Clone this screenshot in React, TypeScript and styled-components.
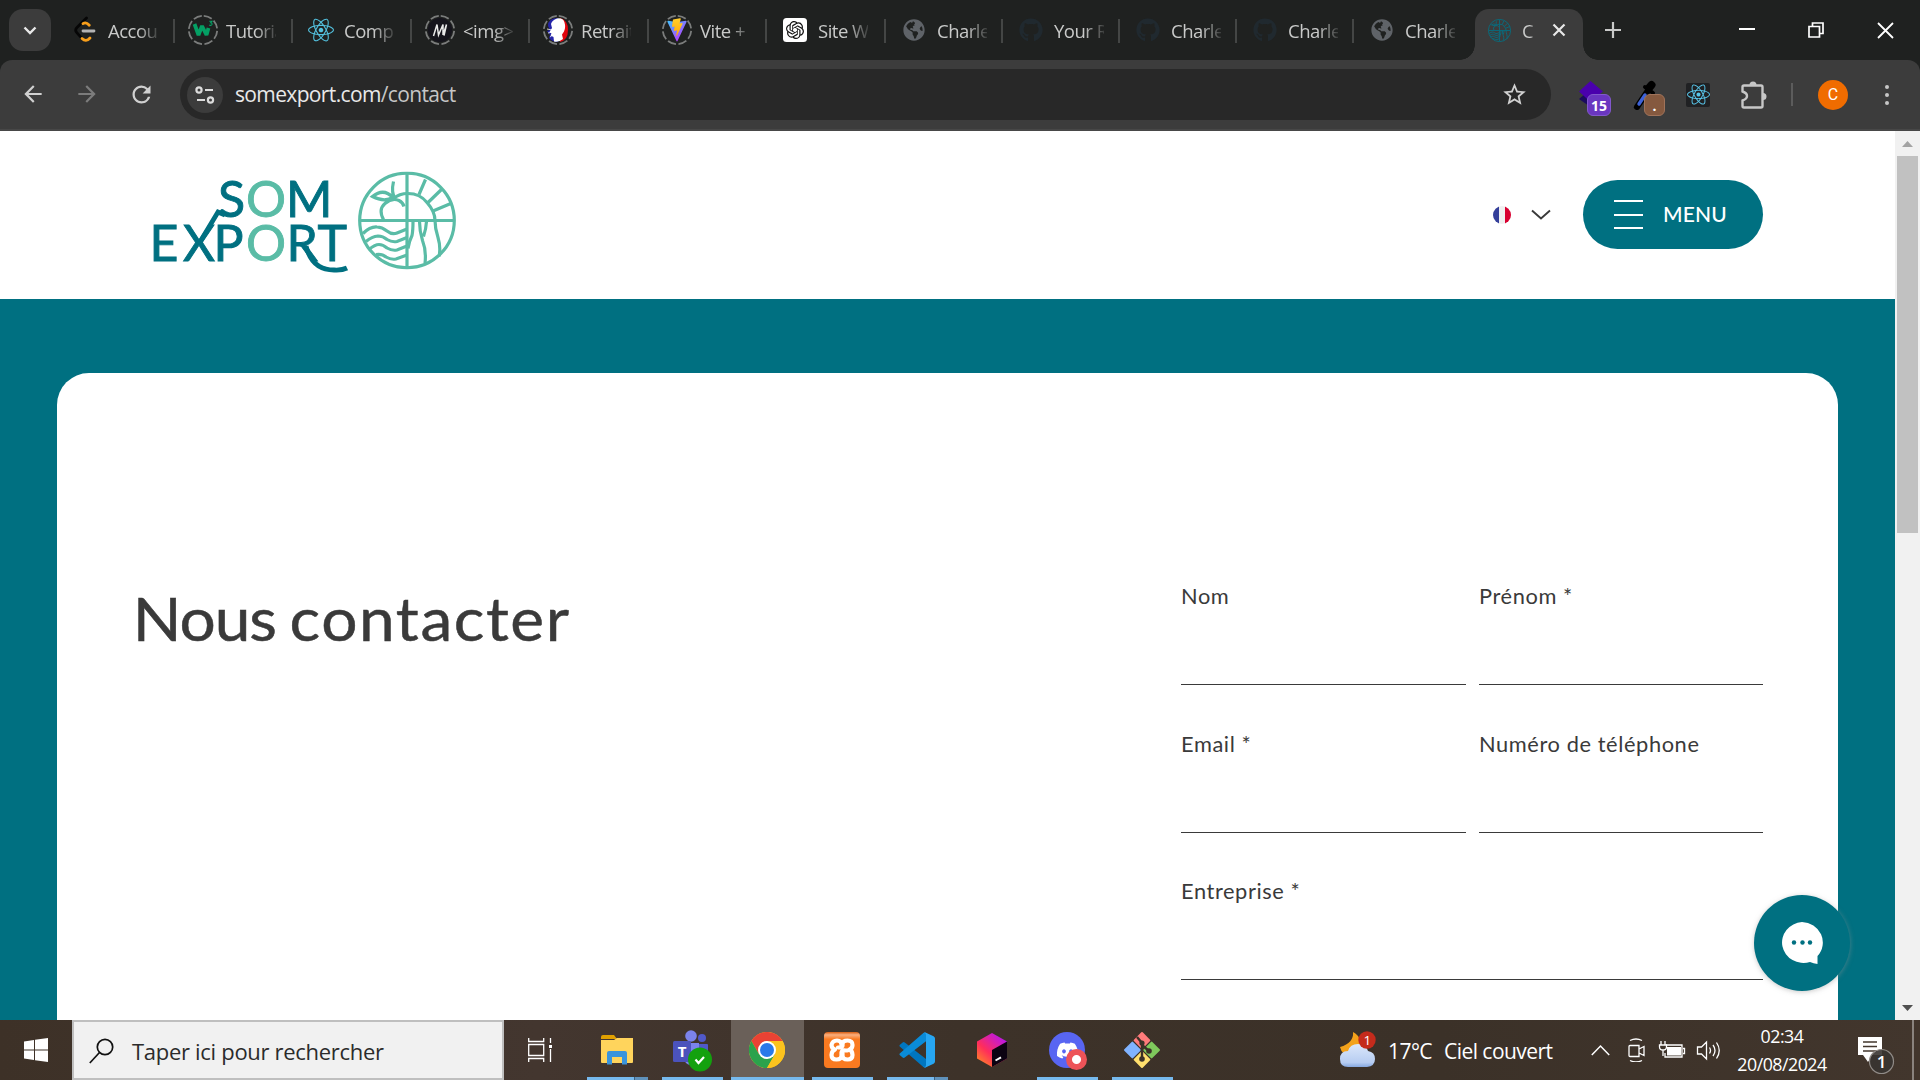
import React from "react";
import styled, { createGlobalStyle } from "styled-components";
import { FaReact, FaGithub, FaDiscord, FaGlobeAmericas } from "react-icons/fa";
import { SiOpenai } from "react-icons/si";
import { MdArrowBack, MdArrowForward, MdRefresh, MdStarBorder } from "react-icons/md";

const TEAL = "#007081";
const MINT = "#5abca6";

const GlobalStyle = createGlobalStyle`
  * { box-sizing: border-box; }
  body { margin: 0; overflow: hidden; background: #fff; }
  svg { display: block; flex: none; }
`;

const Screen = styled.div`
  width: 1920px;
  height: 1080px;
  display: flex;
  flex-direction: column;
  overflow: hidden;
  font-family: "Open Sans", "Noto Sans", sans-serif;
`;

/* ---------- Browser tabs ---------- */
const TabStrip = styled.div`
  height: 60px;
  flex: none;
  display: flex;
  background: #1f2120;
`;
const TabSearch = styled.div`
  width: 42px;
  height: 42px;
  margin: 9px 5px 0 9px;
  border-radius: 14px;
  background: #3c3c3c;
  display: flex;
  align-items: center;
  justify-content: center;
`;
const Tab = styled.div<{ $w: number; $last?: boolean }>`
  width: ${(p) => p.$w}px;
  height: 60px;
  display: flex;
  align-items: center;
  position: relative;
  &::after {
    content: "";
    display: ${(p) => (p.$last ? "none" : "block")};
    position: absolute;
    right: -1px;
    top: 19px;
    width: 2px;
    height: 24px;
    background: #444645;
  }
`;
const TabIcon = styled.div`
  width: 34px;
  height: 34px;
  margin-left: 12px;
  flex: none;
  display: flex;
  align-items: center;
  justify-content: center;
`;
const Ring = styled.div`
  width: 32px;
  height: 32px;
  display: grid;
  place-items: center;
  > * { grid-area: 1 / 1; }
`;
const TabTitle = styled.span<{ $w?: number; $gap?: number }>`
  width: ${(p) => p.$w ?? 50}px;
  margin-left: ${(p) => p.$gap ?? 6}px;
  overflow: hidden;
  white-space: nowrap;
  font-size: 18.5px;
  line-height: 30px;
  letter-spacing: -0.5px;
  color: #c9cac9;
  padding-top: 2px;
  mask-image: linear-gradient(to right, #000 60%, transparent 108%);
`;
const ActiveTab = styled.div`
  width: 108px;
  height: 51px;
  margin: 9px 0 0 4px;
  border-radius: 14px 14px 0 0;
  background: #3c3c3c;
  position: relative;
  display: flex;
  align-items: center;
  padding: 0 17px 9px 13px;
  &::before, &::after {
    content: "";
    position: absolute;
    bottom: 0;
    width: 15px;
    height: 15px;
  }
  &::before { left: -15px; background: radial-gradient(circle at 0 0, transparent 14.5px, #3c3c3c 15px); }
  &::after { right: -15px; background: radial-gradient(circle at 100% 0, transparent 14.5px, #3c3c3c 15px); }
`;
const WindowControls = styled.div`
  flex: 1;
  height: 60px;
  display: flex;
  justify-content: space-between;
  align-items: center;
  padding: 0 26px 0 21px;
`;
const ControlGroup = styled.div`
  display: flex;
  align-items: center;
  gap: 53px;
`;
const CloseWrap = styled.div`
  margin-left: auto;
`;

/* ---------- Toolbar ---------- */
const ToolbarBack = styled.div`
  height: 71px;
  flex: none;
  background: #1f2120;
`;
const Toolbar = styled.div`
  height: 71px;
  border-radius: 12px 12px 0 0;
  background: #3c3c3c;
  border-bottom: 2px solid #474747;
  display: flex;
  align-items: center;
  padding: 0 21px 0 20px;
`;
const NavButtons = styled.div`
  display: flex;
  gap: 28px;
  width: 160px;
  flex: none;
`;
const AddressBar = styled.div`
  width: 1371px;
  height: 51px;
  border-radius: 26px;
  background: #282828;
  display: flex;
  align-items: center;
  padding: 0 23px 0 7px;
`;
const SiteInfo = styled.div`
  width: 36px;
  height: 36px;
  border-radius: 50%;
  background: #3c3c3c;
  display: flex;
  align-items: center;
  justify-content: center;
`;
const Url = styled.div`
  flex: 1;
  margin: -1px 0 0 12px;
  font-size: 21px;
  letter-spacing: -0.64px;
  color: #e9e9e9;
  span { color: #c6c6c6; }
`;
const Extensions = styled.div`
  flex: 1;
  height: 68px;
  display: flex;
  align-items: center;
  padding-left: 27px;
`;
const ExtSlot = styled.div<{ $w: number }>`
  width: ${(p) => p.$w}px;
  height: 44px;
  position: relative;
  display: flex;
  align-items: center;
`;
const Badge = styled.span<{ $bg: string; $edge: string; $x: number; $w: number }>`
  position: absolute;
  left: ${(p) => p.$x}px;
  top: 21px;
  width: ${(p) => p.$w}px;
  height: 22px;
  border-radius: 6px;
  background: ${(p) => p.$bg};
  border: 1px solid ${(p) => p.$edge};
  color: #fff;
  font-size: 14px;
  font-weight: 700;
  line-height: 21px;
  text-align: center;
`;
const ReactTile = styled.div`
  width: 24px;
  height: 24px;
  background: #202123;
  border-radius: 2px;
  display: flex;
  align-items: center;
  justify-content: center;
`;
const ToolDivider = styled.div`
  width: 2px;
  height: 23px;
  background: #5c5c5c;
  margin: 0 25px 0 0;
`;
const Avatar = styled.div`
  width: 30px;
  height: 30px;
  border-radius: 50%;
  background: #f06c00;
  color: #fff;
  font: 16px/30px "Roboto", sans-serif;
  text-align: center;
`;
const Dots = styled.div`
  margin-left: auto;
  margin-right: 10px;
  display: flex;
  flex-direction: column;
  gap: 4px;
  i { width: 4px; height: 4px; border-radius: 50%; background: #c7c7c7; }
`;

/* ---------- Page ---------- */
const Viewport = styled.div`
  height: 889px;
  flex: none;
  display: flex;
  overflow: hidden;
  position: relative;
`;
const Page = styled.div`
  width: 1895px;
  height: 889px;
  display: flex;
  flex-direction: column;
  background: ${TEAL};
  font-family: "Lato", sans-serif;
  color: #3a3a3a;
`;
const Header = styled.header`
  height: 168px;
  flex: none;
  background: #fff;
  display: flex;
  align-items: flex-start;
  justify-content: space-between;
  padding: 34px 132px 0 150px;
`;
const HeaderActions = styled.div`
  display: flex;
  align-items: center;
  padding-top: 15px;
`;
const Flag = styled.div`
  width: 18px;
  height: 18px;
  border-radius: 50%;
  background: linear-gradient(to right, #343f9a 33%, #f0f0f0 33%, #f0f0f0 67%, #d80030 67%);
  margin-right: 20px;
`;
const MenuButton = styled.button`
  width: 180px;
  height: 69px;
  margin-left: 32px;
  border: 0;
  border-radius: 35px;
  background: ${TEAL};
  color: #fff;
  display: flex;
  align-items: center;
  padding: 0 0 0 31px;
  font: 500 21px "Lato", sans-serif;
  letter-spacing: 0.2px;
`;
const MenuLabel = styled.span`
  padding-bottom: 3px;
`;
const Burger = styled.span`
  width: 29px;
  height: 29px;
  margin-right: 20px;
  display: flex;
  flex-direction: column;
  justify-content: space-between;
  i { height: 2px; background: #fff; }
`;
const Card = styled.main`
  margin: 74px 57px 0;
  flex: 1;
  background: #fff;
  border-radius: 32px 32px 0 0;
  display: flex;
  justify-content: space-between;
  padding: 210px 75px 0 76px;
`;
const Title = styled.h1`
  margin: -1px 0 0;
  font-size: 60px;
  font-weight: 400;
  line-height: 72px;
  word-spacing: -1.5px;
  transform: scaleX(1.066);
  transform-origin: 5px 0;
  -webkit-text-stroke: 0.5px #3a3a3a;
`;
const Word = styled.span<{ $track: number }>`
  letter-spacing: ${(p) => p.$track}px;
`;
const Form = styled.form`
  width: 582px;
  display: grid;
  grid-template-columns: 285px 284px;
  column-gap: 13px;
  grid-auto-rows: 147.5px;
`;
const Field = styled.label<{ $wide?: boolean }>`
  grid-column: ${(p) => (p.$wide ? "1 / -1" : "auto")};
  height: 102px;
  border-bottom: 1px solid #3a3a3a;
  font-size: 21.8px;
  line-height: 26px;
  letter-spacing: 0.6px;
`;
const ChatBubble = styled.div`
  position: absolute;
  left: 1754px;
  top: 764px;
  width: 96px;
  height: 96px;
  border-radius: 50%;
  background: ${TEAL};
  box-shadow: 0 1px 5px rgba(150, 150, 150, 0.5);
  display: flex;
  align-items: center;
  justify-content: center;
  padding-right: 1px;
`;
const Scrollbar = styled.div`
  width: 25px;
  height: 889px;
  background: #f1f1f1;
  display: flex;
  flex-direction: column;
  align-items: center;
  padding: 10px 0 9px;
`;
const Thumb = styled.div`
  width: 21px;
  height: 377px;
  margin: 9px 0 auto;
  background: #c1c1c1;
`;

/* ---------- Taskbar ---------- */
const Taskbar = styled.div`
  height: 60px;
  flex: none;
  background: linear-gradient(to right, #3d3127, #43362f 28%, #3d3229 50%, #3b3128 75%, #42362d);
  display: flex;
  color: #fff;
`;
const Center = styled.div<{ $w: number }>`
  width: ${(p) => p.$w}px;
  height: 60px;
  display: flex;
  align-items: center;
  justify-content: center;
`;
const SearchBox = styled.div`
  width: 432px;
  height: 60px;
  border: 2px solid #bfbfbf;
  background: #f1f1f1;
  display: flex;
  align-items: center;
  padding: 2px 0 0 15px;
  font-size: 22px;
  letter-spacing: -0.3px;
  color: #2b2b2b;
  span { margin-left: 18px; }
`;
const AppSlot = styled.div<{ $bar?: "full" | "split"; $active?: boolean }>`
  width: 75px;
  height: 60px;
  display: flex;
  align-items: center;
  justify-content: center;
  padding-right: 1px;
  position: relative;
  background: ${(p) => (p.$active ? "linear-gradient(to right, transparent 1px, #6a6059 1px, #6a6059 74px, transparent 74px)" : "none")};
  &::after {
    content: "";
    position: absolute;
    bottom: 0;
    left: ${(p) => (p.$active ? 1 : 7)}px;
    right: ${(p) => (p.$active ? 1 : 7)}px;
    height: 3px;
    background: ${(p) => (!p.$bar ? "none" : p.$bar === "split" ? "linear-gradient(to right, #76b9ed 47px, #3d5f7c 47px, #3d5f7c 48px, #5f91ba 48px)" : "#76b9ed")};
  }
`;
const Tray = styled.div`
  margin-left: auto;
  display: flex;
  align-items: center;
  width: 581px;
`;
const Weather = styled.div`
  display: flex;
  align-items: center;
  width: 252px;
  font-size: 21px;
  letter-spacing: -0.55px;
  white-space: nowrap;
  svg { margin-right: 12px; }
  span { margin-right: 12px; padding-top: 2px; }
`;
const TrayIcons = styled.div`
  display: flex;
  align-items: center;
  width: 144px;
`;
const Clock = styled.div`
  width: 94px;
  text-align: center;
  font-size: 17.8px;
  line-height: 28px;
  letter-spacing: -0.5px;
  white-space: nowrap;
`;
const Notifications = styled.div`
  margin-left: 29px;
  width: 54px;
`;
const DesktopEdge = styled.div`
  width: 2px;
  height: 60px;
  background: #8a837e;
`;

const DashRing = ({ children }: { children: React.ReactNode }) => (
  <Ring>
    <svg width="32" height="32" viewBox="0 0 32 32" fill="none">
      <circle cx="16" cy="16" r="14.2" stroke="#7b7d7c" strokeWidth="1.8" strokeDasharray="8.6 2.55" transform="rotate(-87 16 16)" />
    </svg>
    {children}
  </Ring>
);

const LeetCode = () => (
  <svg width="22" height="28" viewBox="0 0 22 28" fill="none" strokeWidth="2.8" strokeLinecap="round">
    <path d="M12.500 2 3 11.500q-2.600 2.700 0 5.400l4.500 5" stroke="#060606" />
    <path d="M9 7.600q3-2 6.300 1.700M8 22.500q4 4 8-.500" stroke="#f89f1b" />
    <path d="M9 15h11" stroke="#b3b3b3" />
  </svg>
);
const W3 = () => (
  <svg width="22" height="22" viewBox="0 0 22 22" fill="none" stroke="#04a064">
    <path d="M2.500 5 6.500 16 10 7l4.500 9L16.500 9" strokeWidth="3.800" strokeLinejoin="bevel" />
    <path d="M17.300 2.200H20l-1.400 1.600q1.800.3 1.400 1.700-.9 1.400-2.700.4" strokeWidth="1.100" />
  </svg>
);
const Mdn = () => (
  <svg width="26" height="26" viewBox="0 0 26 26">
    <circle cx="13" cy="13" r="12" fill="#15141c" />
    <path d="M6.500 19 10 7.500 11.500 18 16 7.500V18M16 18l3.500-10.500M17 18.600 19.500 7.500" fill="none" stroke="#e9e9e9" strokeWidth="1.500" />
  </svg>
);
const Marianne = () => (
  <svg width="24" height="26" viewBox="0 0 24 26">
    <path d="M12 1Q2 1 2 9l2 4-3 1 3 4-1 3q3 4 9 4Z" fill="#2424a8" />
    <path d="M14 1q8 2 8 12t-8 12Z" fill="#e1060e" />
    <path d="M11 1.500q6-1 7.500 4 1.500 5-.5 9l-2 3 1 4.500q-4 3.500-9 2.500l-.5-4.500-3-1.500 1-2-2-1.500L6 11 5 7q1-4 6-5.500Z" fill="#fff" />
    <path d="m1 12 5 1M2 16l5-1M4 20l4-3" stroke="#fff" strokeWidth=".8" />
  </svg>
);
const Vite = () => (
  <svg width="22" height="24" viewBox="0 0 22 24">
    <defs>
      <linearGradient id="vp" x1="0" y1="0" x2=".7" y2="1"><stop stopColor="#3fc4ff" /><stop offset="1" stopColor="#bd34fe" /></linearGradient>
      <linearGradient id="vy" x1="0" y1="0" x2="0" y2="1"><stop stopColor="#ffcf2e" /><stop offset="1" stopColor="#ffa800" /></linearGradient>
    </defs>
    <path d="M1.500 4Q1 2.500 2.500 2.700l8.500 1.500 8.500-1.500q1.500 0 1 1.300L11.500 23q-.5.800-1 0Z" fill="url(#vp)" />
    <path d="m7 1.500 7-1.300q1 0 .8.800l-1.300 4.500 2.500-.4q.8 0 .5.900L11 17.500q-.6.900-.8-.2l1-5-2.800.6q-.7 0-.6-.7l1-3.700-2.200.4q-.6 0-.6-.8Z" fill="url(#vy)" />
  </svg>
);
const Emblem = ({ size, color, stroke = 3.2 }: { size: number; color: string; stroke?: number }) => (
  <svg width={size} height={size} viewBox="0 0 98 98" fill="none" stroke={color} strokeWidth={stroke}>
    <circle cx="49" cy="49" r="47.300" />
    <path d="M49 2v94M2 49h94" />
    <path d="M36 27Q41 22 50 22 62 22 69 31 77 40 77 49" />
    <path d="m61 23 6.500-15M69 32 84 17.500M75 39.500l19-8" />
    <path d="M25.500 48Q20 38 27 32q7-6 14-3 4 2 5 6M37 27q-4-6-1.500-17M14.500 25q11-9 20.500 1-9 5-20.500-1Z" />
    <path d="M5 62q7-7 14-6.500 5 0 10 4t10 2l10-4M8 70q6-5 12-5.500 5 0 9 3.500 5 3 10 2l10-4M11 78q6-5 10-5 4 0 8 3.500 5 3 10 2l10-4M18 83q6-1 10 2.500 5 3 10 2l11-4" />
    <path d="M55 50q0 9-1 14-3 6-4 13M61.500 50q0 9 3 19 4 10 2.500 23M68.500 50q-.5 8-3 15M77 49q0 8 3 17 3 10 1 19" />
  </svg>
);

const Logo = () => (
  <svg width="312" height="118" viewBox="150 165 312 118" fontFamily="Lato, sans-serif" fontSize="50" strokeWidth="0.9">
    <g fill={TEAL} stroke={TEAL}>
      <text x="218" y="217">S</text>
      <text x="286" y="217">M</text>
      <text x="149.500" y="260.500">E</text>
      <text x="183" y="260.500" textLength="32" lengthAdjust="spacingAndGlyphs">X</text>
      <text x="213.500" y="260.500">P</text>
      <text x="286.500" y="260.500">R</text>
      <text x="317.500" y="260.500">T</text>
    </g>
    <g fill={MINT} stroke={MINT}>
      <text x="246" y="217">O</text>
      <text x="246" y="260.500">O</text>
    </g>
    <path d="M200 242 218 212l7 3M306 246q6 24 28 24 8 .5 13-2" fill="none" stroke={TEAL} strokeWidth="4.800" />
    <g transform="translate(358 171.500)">
      <Emblem size={98} color={MINT} />
    </g>
  </svg>
);

const Layers = () => (
  <svg width="26" height="30" viewBox="0 0 26 30">
    <path d="M1 19l6-5 12 12-5 2Z" fill="#1b0a5e" />
    <path d="M12.500 1 25 11.500 12.500 22 1 11.500Z" fill="#4a00ad" />
  </svg>
);
const Dropper = () => (
  <svg width="26" height="30" viewBox="0 0 26 30" strokeLinecap="round">
    <path d="M4 27 14 12" stroke="#000" strokeWidth="6" />
    <path d="m6 24 6-9" stroke="#3d62d8" strokeWidth="3.400" />
    <path d="m16 8 2.500-3" stroke="#000" strokeWidth="8" />
    <path d="m12 7 8 6" stroke="#000" strokeWidth="4" />
  </svg>
);
const Puzzle = () => (
  <svg width="27" height="30" viewBox="0 0 27 30">
    <path d="M3 5.500h17q1.500 0 1.500 1.500v19q0 1.500-1.500 1.500H3Q1.500 27.500 1.500 26v-5.500Q6 19 6 16t-4.500-4.500V7Q1.500 5.500 3 5.500Z" fill="none" stroke="#c7c7c7" strokeWidth="2.400" />
    <path d="M8.500 5a3.500 3.500 0 0 1 7 0ZM22 13a3.500 3.500 0 0 1 0 7Z" fill="#c7c7c7" />
  </svg>
);

const Explorer = () => (
  <svg width="34" height="30" viewBox="0 0 34 30">
    <path d="M1 2q0-2 2-2h11l3 4H1Z" fill="#e0a000" />
    <path d="M1 5h13l3-2h16v24q0 1-1 1H2q-1 0-1-1Z" fill="#ffd45c" />
    <path d="M7 29.500V18q0-2 2-2h16q2 0 2 2v11.500h-5V22H12v7.500Z" fill="#3a94dc" />
  </svg>
);
const Teams = () => (
  <svg width="40" height="44" viewBox="0 0 40 44">
    <circle cx="19" cy="8" r="5.800" fill="#7b83eb" />
    <circle cx="30" cy="10" r="4" fill="#5059c9" />
    <path d="M24 16h11q1 0 1 1v10q0 6-8 7Z" fill="#5059c9" />
    <path d="M12 15h15v12q-1 10-9 10-5-1-6-6Z" fill="#7b83eb" />
    <rect x="1" y="13" width="18" height="21" rx="1.500" fill="#4b53bc" />
    <text x="10" y="29" fontFamily="Open Sans" fontSize="15" fontWeight="700" textAnchor="middle" fill="#fff">T</text>
    <circle cx="28" cy="31.500" r="12" fill="#13a10e" />
    <path d="m23.500 31.500 3 3.500 5.500-6" fill="none" stroke="#fff" strokeWidth="2.200" />
  </svg>
);
const Chrome = () => (
  <svg width="36" height="36" viewBox="0 0 36 36">
    <circle cx="18" cy="18" r="18" fill="#fcc31e" />
    <path d="M18 9h15.600A18 18 0 0 0 2.400 9l7.800 13.500Z" fill="#e94234" />
    <path d="M2.400 9A18 18 0 0 0 18 36l7.800-13.500L18 18l-7.800 4.500Z" fill="#2ba24c" />
    <path d="M18 36a18 18 0 0 0 15.600-27H18l7.800 13.500Z" fill="#fcc31e" />
    <circle cx="18" cy="18" r="9" fill="#fff" />
    <circle cx="18" cy="18" r="7" fill="#2979ea" />
  </svg>
);
const XamppTile = styled.div`
  width: 36px;
  height: 36px;
  border-radius: 4px;
  background: linear-gradient(#d85c10, #fab080 8%, #fa7a20 20%);
  display: flex;
  align-items: center;
  justify-content: center;
  color: #fff;
`;
const XamppMark = () => (
  <svg width="28" height="24" viewBox="0 0 28 24" fill="none" stroke="#fff" strokeWidth="4.2" strokeLinejoin="round" strokeLinecap="round">
    <path d="M10 9.500h3.500V6.500Q13.500 2.500 9 2.500T3.500 7Q3.500 10.500 7 11.500 3.500 13 3.500 17q0 4.500 5 4.500t5-4V14.500Q14 12 17.500 12.500h2" />
    <path d="M14.500 8V6.500q0-4 5-4t5 4.500q0 3.500-3 4.500 3 1.500 3 5.500 0 4.500-5 4.500t-5-4V15" />
  </svg>
);
const VsCode = () => (
  <svg width="36" height="36" viewBox="0 0 100 100">
    <path d="M2 36 10 29q3-2 6 0L75 75v23Q70 100 66 96L2 40Q0 38 2 36Z" fill="#0076c0" />
    <path d="M2 64 10 71q3 2 6 0L75 26V2Q70 0 66 4L2 60Q0 62 2 64Z" fill="#0a8bd8" />
    <path d="M75 2 96 12q4 2 4 6v64q0 4-4 6L75 98q-4 2-8-2 8 4 8-4V8q0-8-8-4 4-4 8-2Z" fill="#27a6f2" />
  </svg>
);
const Toolbox = () => (
  <svg width="30" height="34" viewBox="0 0 30 34">
    <defs>
      <linearGradient id="tb" x1="0" y1="1" x2=".8" y2="0"><stop stopColor="#ff9b1a" /><stop offset=".45" stopColor="#ff2d5b" /><stop offset="1" stopColor="#b415f5" /></linearGradient>
    </defs>
    <path d="M15 0 30 8.500v17L15 34 0 25.500v-17Z" fill="url(#tb)" />
    <path d="m15 17 15-8.500v17L15 34Z" fill="#0c0312" />
    <path d="m18.500 27.500 5.500-3.200" stroke="#fff" strokeWidth="2" />
  </svg>
);
const DiscordDisc = styled.div`
  width: 36px;
  height: 36px;
  border-radius: 50%;
  background: #5865f2;
  display: flex;
  align-items: center;
  justify-content: center;
  position: relative;
  color: #fff;
  &::after {
    content: "";
    position: absolute;
    right: -2px;
    bottom: -2px;
    width: 21px;
    height: 21px;
    border-radius: 50%;
    background: radial-gradient(circle, #fff 4px, #ed5358 5px);
  }
`;
const GitDiamond = () => (
  <svg width="38" height="38" viewBox="0 0 38 38">
    <g transform="rotate(45 19 19)">
      <rect x="6" y="6" width="12.400" height="12.400" rx="1" fill="#ff7b7b" />
      <rect x="19.600" y="6" width="12.400" height="12.400" rx="1" fill="#7fc95c" />
      <rect x="6" y="19.600" width="12.400" height="12.400" rx="1" fill="#80b3ff" />
      <rect x="19.600" y="19.600" width="12.400" height="12.400" rx="1" fill="#ffdf6d" />
    </g>
    <path d="m14 6 5 6v17M19 14l7 6" stroke="#3b3128" strokeWidth="2.400" fill="none" />
    <circle cx="19" cy="12" r="2.600" fill="#3b3128" />
    <circle cx="19" cy="28" r="2.800" fill="#3b3128" />
    <circle cx="26" cy="20" r="2.800" fill="#3b3128" />
  </svg>
);
const WeatherIcon = () => (
  <svg width="37" height="42" viewBox="0 0 37 42">
    <defs><linearGradient id="cl" x1="0" y1="0" x2="0" y2="1"><stop stopColor="#dbe7fa" /><stop offset=".8" stopColor="#b7cdf2" /><stop offset="1" stopColor="#86a8e0" /></linearGradient></defs>
    <path d="M14 3q1 11-13 15 2 9 12 8 9-2 9-13-2-7-8-10Z" fill="#f3a21b" />
    <path d="M9 38q-8 0-8-8t8-8q2-7 10-7 8 0 10 7 7 1 7 8t-8 8Z" fill="url(#cl)" />
    <circle cx="28" cy="11" r="8.700" fill="#c42b1c" />
    <text x="28" y="16" fontSize="13.500" textAnchor="middle" fill="#fff">1</text>
  </svg>
);

type TabInfo = { title: string; icon: React.ReactNode; w: number };
const globe = <FaGlobeAmericas size={22} color="#5f6368" />;
const octocat = <FaGithub size={24} color="#20292f" />;
const tabs: TabInfo[] = [
  { title: "Accoun", icon: <LeetCode />, w: 118 },
  { title: "Tutoria", icon: <DashRing><W3 /></DashRing>, w: 118 },
  { title: "Compo", icon: <FaReact size={26} color="#53c1de" />, w: 119 },
  { title: "<img>:", icon: <DashRing><Mdn /></DashRing>, w: 118 },
  { title: "Retraite", icon: <DashRing><Marianne /></DashRing>, w: 119 },
  { title: "Vite + R", icon: <DashRing><Vite /></DashRing>, w: 118 },
  {
    title: "Site We",
    icon: (
      <svg width="24" height="24" viewBox="0 0 24 24">
        <rect width="24" height="24" rx="3.500" fill="#fff" />
        <SiOpenai x={3} y={3} size={18} color="#111" />
      </svg>
    ),
    w: 119,
  },
  { title: "Charles", icon: globe, w: 117 },
  { title: "Your Re", icon: octocat, w: 117 },
  { title: "Charles", icon: octocat, w: 117 },
  { title: "Charles", icon: octocat, w: 117 },
  { title: "Charles", icon: globe, w: 118 },
];

export default function App() {
  return (
    <Screen>
      <GlobalStyle />
      <TabStrip>
        <TabSearch>
          <svg width="14" height="9" viewBox="0 0 14 9" fill="none" stroke="#e8e8e8" strokeWidth="2.400"><path d="m1.500 1.500 5.500 5.500 5.500-5.500" /></svg>
        </TabSearch>
        {tabs.map((t, i) => (
          <Tab key={i} $w={t.w} $last={i === tabs.length - 1}>
            <TabIcon>{t.icon}</TabIcon>
            <TabTitle>{t.title}</TabTitle>
          </Tab>
        ))}
        <ActiveTab>
          <Emblem size={23} color="#0a6b7c" stroke={4} />
          <TabTitle $w={13} $gap={11}>C</TabTitle>
          <CloseWrap>
            <svg width="14" height="14" viewBox="0 0 14 14" stroke="#e8e8e8" strokeWidth="2.200"><path d="m1.500 1.500 11 11m0-11-11 11" /></svg>
          </CloseWrap>
        </ActiveTab>
        <WindowControls>
          <svg width="18" height="18" viewBox="0 0 18 18" stroke="#c9cac9" strokeWidth="2.200"><path d="M9 1v16M1 9h16" /></svg>
          <ControlGroup>
            <svg width="16" height="16" viewBox="0 0 16 16" stroke="#fff" strokeWidth="2"><path d="M0 7h16" /></svg>
            <svg width="16" height="16" viewBox="0 0 16 16" stroke="#fff" strokeWidth="1.700" fill="none"><path d="M1 4.500h10.500V15H1ZM4.500 4V1H15v10.500h-3" /></svg>
            <svg width="17" height="17" viewBox="0 0 17 17" stroke="#fff" strokeWidth="1.800"><path d="m1 1 15 15m0-15L1 16" /></svg>
          </ControlGroup>
        </WindowControls>
      </TabStrip>

      <ToolbarBack>
        <Toolbar>
          <NavButtons>
            <MdArrowBack size={26} color="#d0d0d0" />
            <MdArrowForward size={26} color="#7c7c7c" />
            <MdRefresh size={27} color="#d0d0d0" />
          </NavButtons>
          <AddressBar>
            <SiteInfo>
              <svg width="20" height="18" viewBox="0 0 20 18" fill="none" stroke="#dcdcdc" strokeWidth="2.200">
                <circle cx="4" cy="4" r="2.600" /><path d="M10 4h8M2 14h8" /><circle cx="15.500" cy="14" r="2.600" />
              </svg>
            </SiteInfo>
            <Url>somexport.com<span>/contact</span></Url>
            <MdStarBorder size={27} color="#d0d0d0" />
          </AddressBar>
          <Extensions>
            <ExtSlot $w={55}><Layers /><Badge $bg="#6a36c0" $edge="#8258cc" $x={9} $w={24}>15</Badge></ExtSlot>
            <ExtSlot $w={53}><Dropper /><Badge $bg="#85593f" $edge="#a0735a" $x={11} $w={21}>.</Badge></ExtSlot>
            <ExtSlot $w={55}><ReactTile><FaReact size={23} color="#58c4e8" /></ReactTile></ExtSlot>
            <ExtSlot $w={50}><Puzzle /></ExtSlot>
            <ToolDivider />
            <Avatar>C</Avatar>
            <Dots><i /><i /><i /></Dots>
          </Extensions>
        </Toolbar>
      </ToolbarBack>

      <Viewport>
        <Page>
          <Header>
            <Logo />
            <HeaderActions>
              <Flag />
              <svg width="20" height="12" viewBox="0 0 20 12" fill="none" stroke="#3a3a3a" strokeWidth="1.900"><path d="m1 1.500 9 8 9-8" /></svg>
              <MenuButton type="button">
                <Burger><i /><i /><i /></Burger>
                <MenuLabel>MENU</MenuLabel>
              </MenuButton>
            </HeaderActions>
          </Header>
          <Card>
            <Title><Word $track={-1}>Nous </Word><Word $track={1.500}>contacter</Word></Title>
            <Form>
              <Field>Nom</Field>
              <Field>Prénom *</Field>
              <Field>Email *</Field>
              <Field>Numéro de téléphone</Field>
              <Field $wide>Entreprise *</Field>
            </Form>
          </Card>
        </Page>
        <Scrollbar>
          <svg width="11" height="6" viewBox="0 0 11 6"><path d="M0 6 5.500 0 11 6Z" fill="#a3a3a3" /></svg>
          <Thumb />
          <svg width="11" height="6" viewBox="0 0 11 6"><path d="M0 0h11L5.500 6Z" fill="#505050" /></svg>
        </Scrollbar>
        <ChatBubble>
          <svg width="44" height="44" viewBox="0 0 44 44">
            <path d="M22 1a21.500 20.500 0 0 1 15.500 34V43q-4-.5-7.500-2A21.500 20.500 0 1 1 22 1Z" fill="#fff" />
            <g fill={TEAL}><circle cx="14" cy="21.500" r="2.200" /><circle cx="22.500" cy="21.500" r="2.200" /><circle cx="30" cy="21.500" r="2.200" /></g>
          </svg>
        </ChatBubble>
      </Viewport>

      <Taskbar>
        <Center $w={72}>
          <svg width="24" height="24" viewBox="0 0 24 24" fill="#fff"><path d="M0 3.400 10 2v9.500H0ZM11 1.800 24 0v11.500H11ZM0 12.500h10V22L0 20.600ZM11 12.500h13V24l-13-1.800Z" /></svg>
        </Center>
        <SearchBox>
          <svg width="25" height="26" viewBox="0 0 25 26" fill="none" stroke="#111" strokeWidth="1.700"><circle cx="16" cy="9" r="7.700" /><path d="M10.500 14.500.800 25" /></svg>
          <span>Taper ici pour rechercher</span>
        </SearchBox>
        <Center $w={76}>
          <svg width="28" height="24" viewBox="0 0 28 24" fill="none" stroke="#fff" strokeWidth="1.300"><path d="M.700 0v3.500h15V0M.700 6.500h15v11h-15ZM.700 24v-3.500h15V24M22.500 0v5M22.500 11v13" /><path d="M21 7h3v3h-3Z" fill="#fff" stroke="none" /></svg>
        </Center>
        <AppSlot $bar="split"><Explorer /></AppSlot>
        <AppSlot $bar="full"><Teams /></AppSlot>
        <AppSlot $bar="full" $active><Chrome /></AppSlot>
        <AppSlot $bar="full"><XamppTile><XamppMark /></XamppTile></AppSlot>
        <AppSlot $bar="split"><VsCode /></AppSlot>
        <AppSlot><Toolbox /></AppSlot>
        <AppSlot $bar="full"><DiscordDisc><FaDiscord size={23} /></DiscordDisc></AppSlot>
        <AppSlot $bar="full"><GitDiamond /></AppSlot>
        <Tray>
          <Weather><WeatherIcon /><span>17°C</span><span>Ciel couvert</span></Weather>
          <TrayIcons>
            <svg width="130" height="24" viewBox="0 0 130 24" fill="none" stroke="#fff" strokeWidth="1.500">
              <path d="m.800 17 8.700-9 8.700 9" />
              <path d="M39 7.500h9v11h-9q-1 0-1-1v-9q0-1 1-1ZM48 11l5-2.500v9L48 15M39 2.500q6-3 12 0M39 22.500q6 3 12 0" strokeWidth="1.300" />
              <path d="M75 7h16v12H74v-4M92 10.500h1.500v5H92" strokeWidth="1.300" /><path d="M76 9h14v8.500H76Z" fill="#fff" stroke="none" />
              <path d="M70 3v4M74 3v4M68.500 7h7v2q0 3-3.500 3t-3.500-3ZM72 12v6" strokeWidth="1.300" />
              <path d="M106.500 9h4l5-5v17l-5-5h-4ZM118.500 9.500q2 3 0 6M122 7q4 5.500 0 11M125.500 4.500q5.500 8 0 16" strokeWidth="1.300" />
            </svg>
          </TrayIcons>
          <Clock><div>02:34</div><div>20/08/2024</div></Clock>
          <Notifications>
            <svg width="37" height="50" viewBox="0 0 37 50">
              <path d="M0 12h24v18H14l-4 7-5-7H0Z" fill="#fff" />
              <path d="M5 17h14M5 21.500h14M5 26h14" stroke="#43372e" strokeWidth="1.300" />
              <circle cx="23.500" cy="36.500" r="12" fill="#383431" fillOpacity=".9" stroke="#918c88" strokeWidth="1.200" />
              <text x="23.500" y="42.500" fontSize="17" fontWeight="600" textAnchor="middle" fill="#fff">1</text>
            </svg>
          </Notifications>
          <DesktopEdge />
        </Tray>
      </Taskbar>
    </Screen>
  );
}
